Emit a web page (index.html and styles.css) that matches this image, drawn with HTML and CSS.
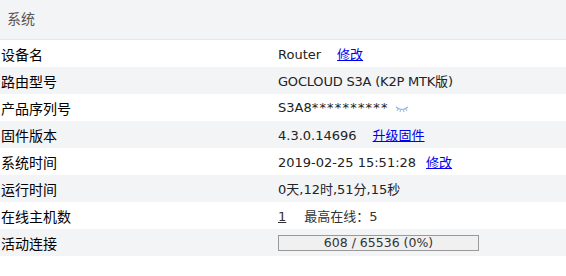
FILE: index.html
```html
<!DOCTYPE html>
<html lang="zh-CN">
<head>
  <meta charset="UTF-8" />
  <title>系统</title>
  <link rel="stylesheet" href="styles.css">
</head>
<body>

  <div class="panel">
    <div class="panel-head">系统</div>
    <table class="info">
      <tr>
        <td class="label">设备名</td>
        <td>Router<a href="#" class="act">修改</a></td>
      </tr>
      <tr>
        <td class="label">路由型号</td>
        <td class="model">GOCLOUD S3A (K2P MTK版)</td>
      </tr>
      <tr>
        <td class="label">产品序列号</td>
        <td>S3A8<span class="mask">**********</span>
          <svg class="eye" width="14" height="8" viewBox="0 0 14 8">
            <path d="M1 2 Q7 7 13 2" fill="none" stroke="#8fb4d9" stroke-width="1.2"/>
            <path d="M3 4 L2 6 M5.5 5 L5 7 M8.5 5 L9 7 M11 4 L12 6" stroke="#8fb4d9" stroke-width="1"/>
          </svg>
        </td>
      </tr>
      <tr>
        <td class="label">固件版本</td>
        <td>4.3.0.14696<a href="#" class="act">升级固件</a></td>
      </tr>
      <tr>
        <td class="label">系统时间</td>
        <td>2019-02-25 15:51:28<a href="#" class="act act-near">修改</a></td>
      </tr>
      <tr>
        <td class="label">运行时间</td>
        <td>0天,12时,51分,15秒</td>
      </tr>
      <tr>
        <td class="label">在线主机数</td>
        <td><a href="#" class="count">1</a><span class="peak">最高在线：5</span></td>
      </tr>
      <tr>
        <td class="label">活动连接</td>
        <td><div class="bar">608 / 65536 (0%)</div></td>
      </tr>
    </table>
  </div>

</body>
</html>
```

FILE: styles.css
```css
body {
  margin: 0;
  background: #fff;
  font-family: "DejaVu Sans", "Noto Sans CJK SC", sans-serif;
  font-size: 13px;
  color: #222;
}
.panel-head {
  height: 40px;
  line-height: 38px;
  padding-left: 7px;
  background: #f3f4f6;
  color: #555;
  font-size: 14px;
  border-bottom: 1px solid #e6e7ea;
  box-sizing: border-box;
}
.info {
  width: 100%;
  border-collapse: collapse;
}
.info td {
  height: 27px;
  padding: 0;
  vertical-align: middle;
}
.info tr:nth-child(even) {
  background: #f3f4f6;
}
.label {
  width: 277px;
  padding-left: 1px !important;
  color: #000;
  font-size: 14px;
}
.model {
  letter-spacing: -0.2px;
}
.act {
  margin-left: 16px;
  color: #0000ee;
}
.act-near {
  margin-left: 10px;
}
.mask {
  letter-spacing: 1.2px;
}
.count {
  color: #333;
}
.peak {
  margin-left: 18px;
  color: #333;
}
.eye {
  vertical-align: middle;
  margin-left: 2px;
}
.bar {
  width: 199px;
  height: 14px;
  line-height: 14px;
  border: 1px solid #999;
  background: #f0f0f0;
  text-align: center;
  font-size: 12.5px;
  color: #333;
}
```
